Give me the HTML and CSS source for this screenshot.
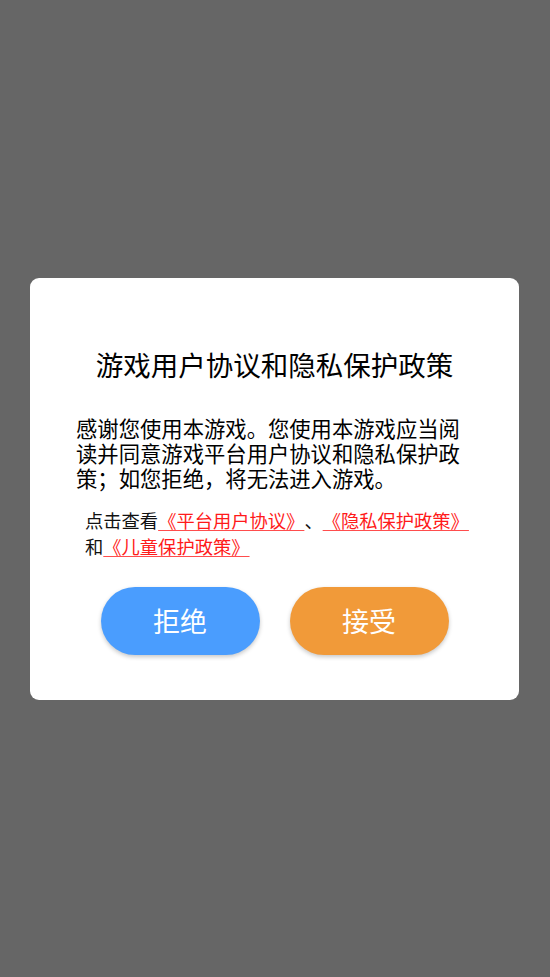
FILE: index.html
```html
<!DOCTYPE html>
<html lang="zh-CN">
<head>
<meta charset="utf-8">
<title>游戏用户协议和隐私保护政策</title>
<link rel="stylesheet" href="styles.css">
</head>
<body>
<div class="overlay">
  <div class="dialog">
    <h1 class="title">游戏用户协议和隐私保护政策</h1>
    <p class="body">感谢您使用本游戏。您使用本游戏应当阅读并同意游戏平台用户协议和隐私保护政策；如您拒绝，将无法进入游戏。</p>
    <p class="links">点击查看<a class="link" href="#">《平台用户协议》</a>、<a class="link" href="#">《隐私保护政策》</a><br>和<a class="link" href="#">《儿童保护政策》</a></p>
    <div class="actions">
      <button class="btn btn-reject">拒绝</button>
      <button class="btn btn-accept">接受</button>
    </div>
  </div>
</div>
</body>
</html>
```
FILE: styles.css
```css
html, body {
  margin: 0;
  padding: 0;
  height: 100%;
}
body {
  background: #666666;
  font-family: "Noto Sans CJK SC", "Noto Sans", sans-serif;
  text-spacing-trim: space-all;
}
.overlay {
  height: 100%;
  display: flex;
  align-items: center;
  justify-content: center;
}
.dialog {
  width: 489px;
  margin-left: -1px;
  box-sizing: border-box;
  background: #ffffff;
  border-radius: 9px;
  padding: 66px 40px 45px 46px;
  display: flex;
  flex-direction: column;
}
.title {
  margin: 0 0 0 -6px;
  font-size: 27.5px;
  font-weight: normal;
  line-height: 40px;
  text-align: center;
  color: #000;
}
.body {
  margin: 31px 0 0 0;
  font-size: 21.33px;
  line-height: 25px;
  color: #000;
}
.links {
  margin: 17px 0 0 9px;
  font-size: 18.3px;
  line-height: 26px;
  color: #111;
  text-spacing-trim: space-all;
}
.link {
  color: #ff1a1a;
  text-decoration: underline;
  text-decoration-color: #ff4d4d;
  text-underline-offset: 2px;
}
.actions {
  margin-top: 28px;
  margin-left: -6px;
  display: flex;
  justify-content: center;
  gap: 30px;
}
.btn {
  width: 159px;
  height: 68px;
  border: none;
  border-radius: 34px;
  color: #fff;
  font-family: "Noto Sans CJK SC", "Noto Sans", sans-serif;
  font-size: 27px;
  box-shadow: 0 2px 4px rgba(0, 0, 0, 0.22);
  padding: 0;
}
.btn-reject {
  background: #4a9dfe;
}
.btn-accept {
  background: #f19a39;
}
```
